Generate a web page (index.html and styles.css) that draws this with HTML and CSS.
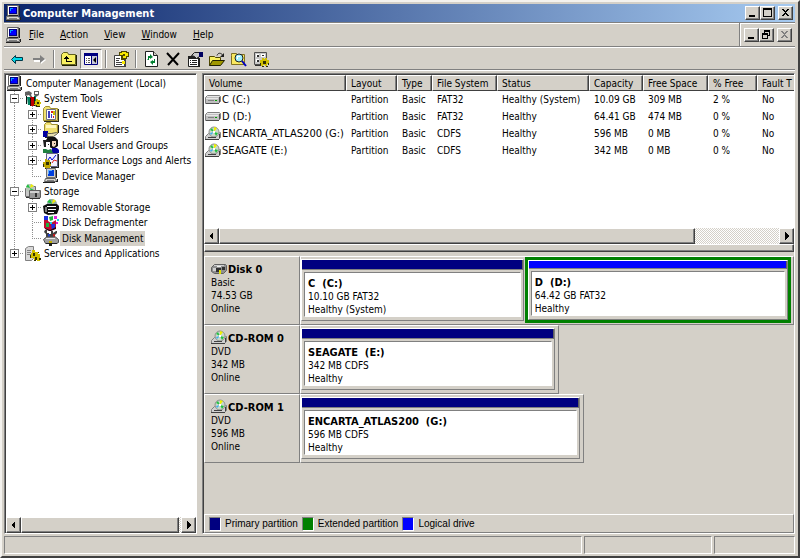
FILE: index.html
```html
<!DOCTYPE html>
<html lang="en">
<head>
<meta charset="UTF-8">
<meta name="viewport" content="width=device-width, initial-scale=1.0">
<title>Computer Management</title>
<link rel="stylesheet" href="styles.css">
</head>
<body>
<svg class="sprite" aria-hidden="true">
  <symbol id="computer" viewBox="0 0 16 16">
    <path fill="#b8b4ac" stroke="#606060" d="M1.500.5h11v10h-11z"/>
    <path fill="#fff" d="M2 1h9v1H3v8H2z"/>
    <path fill="#000080" d="M3 2h8v7H3z"/>
    <path fill="#0000ff" d="M4 3h6v5H4z"/>
    <path fill="#00a0ff" d="M4 3h3v1H5v2H4z"/>
    <path fill="#d8d6d0" stroke="#707070" d="M.5 11.500h11l2 1v2H.5z"/>
    <path fill="#808080" d="M3 13h8v1H3z"/>
    <path fill="#202020" d="M0 15h14v1H0zM13 1h1v10h-1zM14 12h1v3h-1zM3 10h9v1H3z"/>
  </symbol>
  <symbol id="tools" viewBox="0 0 16 16">
    <path fill="#606060" d="M0 1l4-1 3 2-1 2 2 3-1 1-3-4-4 1zM9 0h5v4l-3 2-2-2z"/>
    <path fill="#fff" d="M10 1h3v2h-3z"/>
    <path fill="#c00000" d="M5 6h4v9H6z"/>
    <path fill="#008060" d="M2 6h3v8H3zM9 5h2v5H9z"/>
    <path fill="#101010" d="M1 5h1v8H1zM5 7h1v8H5zM9 6h1v9H9z"/>
    <path fill="#d0c000" d="M11 8h2v1h2v2h1v2h-1v2h-4v-1h-2v-4h2z"/>
    <path fill="#303000" d="M12 11h2v2h-2zM10 14h2v1h3v1h-4zM9 10h1v3H9z"/>
  </symbol>
  <symbol id="events" viewBox="0 0 16 16">
    <path fill="#f0e070" stroke="#a09030" d="M.5 2.500l2-2h4l1 2h7v12H.5z"/>
    <path fill="#fff" stroke="#707080" d="M3.500 3.500h9v10h-9z"/>
    <path fill="#4040c0" d="M5 5h2v7H5zM8 8h1v4H8z"/>
    <path fill="#e02020" d="M8 5h2v2H8zM10 10h1v2h-1z"/>
    <path fill="#d0c000" d="M10 5h2v4h-2z"/>
    <path fill="#303020" d="M15 3h1v13H1v-1h14z"/>
  </symbol>
  <symbol id="shared" viewBox="0 0 16 16">
    <path fill="#f0e070" stroke="#a09030" d="M1.500 2.500l2-2h4l1 2h6v9h-13z"/>
    <path fill="#fff8c0" d="M3 3h10v3H3z"/>
    <path fill="#0000a0" d="M0 9h5v6H0z"/>
    <path fill="#e8e0b0" stroke="#606050" d="M4.500 11.500h4l5-1 1 1-4 3h-6z"/>
    <path fill="#202020" d="M2 15h10v1H2zM15 3h1v8h-1z"/>
  </symbol>
  <symbol id="users" viewBox="0 0 16 16">
    <path fill="#101010" d="M5 0h7l3 3v6l-3 2H8L3 7V3z"/>
    <path fill="#f0d8c0" d="M9 4h4v4l-2 2-2-1z"/>
    <path fill="#fff" d="M2 5h5v5l-2 2-3-2z"/>
    <path fill="#202020" d="M0 3h5l2 2H3v5H1zM5 7h1v1H5zM11 6h1v1h-1z"/>
    <path fill="#0000a0" d="M9 11h5l2 2v3H8z"/>
    <path fill="#208040" d="M0 12h3l2 1 3-1 2 4H0z"/>
  </symbol>
  <symbol id="perf" viewBox="0 0 16 16">
    <path fill="#f0f0ff" stroke="#606080" d="M3.500.5h11v13h-11z"/>
    <path fill="none" stroke="#0000d0" d="M5 7l2-3 2 3 4-5"/>
    <path fill="none" stroke="#e02020" d="M9 10l2-3 3 1"/>
    <path fill="#c0a800" d="M2 6h2v1h3v2h1v4H7v2H2v-1H0V9h2z"/>
    <path fill="#303000" d="M3 9h3v3H3zM0 11h1v3H0zM2 15h5v1H2zM7 9h1v2H7z"/>
    <path fill="#202020" d="M15 1h1v14H8v-1h7z"/>
  </symbol>
  <symbol id="device" viewBox="0 0 16 16">
    <path fill="#d4d0c8" stroke="#707070" d="M3.500.5h9v9h-9z"/>
    <path fill="#0040e0" d="M5 2h6v6H5z"/>
    <path fill="#60b0ff" d="M5 2h4v1H6v3H5z"/>
    <path fill="#d8d6d0" stroke="#606060" d="M2.500 10.500h10l1 3h-12z"/>
    <path fill="#202020" d="M0 14h12v1H0zM13 2h1v8h-1zM14 11h1v3h-2v-1h1z"/>
    <path fill="#808080" d="M4 12h7v1H4z"/>
  </symbol>
  <symbol id="storage" viewBox="0 0 16 16">
    <path fill="#c8c8c8" stroke="#707070" d="M.5 4.500l3-2h7v10H.5z"/>
    <circle cx="5" cy="4" r="4" fill="#b8c8b8"/>
    <path fill="#20c040" d="M5 4L1 3l2-3zM5 4l4 2-3 2z"/>
    <path fill="#f0f000" d="M5 4l1-4 3 2z"/>
    <path fill="#989898" stroke="#606060" d="M4.500 6.500h11v7l-3 1h-8z"/>
    <path fill="#d0d0d0" d="M5 7h9v2H5z"/>
    <path fill="#303030" d="M10 9h2v4h-2zM1 13h3v1H1zM5 14h10v1H5z"/>
  </symbol>
  <symbol id="removable" viewBox="0 0 16 16">
    <circle cx="9" cy="5" r="5" fill="#90a8a8"/>
    <path fill="#20c040" d="M9 5L4 3l3-3zM9 5l5 1-2 3z"/>
    <path fill="#f0f000" d="M9 5l1-5 3 2z"/>
    <path fill="#101010" d="M0 7l4-2h10l2 2v3l-2 5-9 1-4-2z"/>
    <path fill="#fff" d="M4 7h9v1H4zM5 10h8v1H5zM5 13h6v1H5z"/>
    <path fill="#808080" d="M2 8h2v5H2z"/>
  </symbol>
  <symbol id="defrag" viewBox="0 0 16 16">
    <path fill="#c01030" d="M1 3l4-2v5l3 2 5-3v8l-6 3-6-3z"/>
    <path fill="#2030e0" d="M1 1h4v4H1zM8 9h4v4l-3 2z"/>
    <path fill="#20b040" d="M6 2l4-1v4l-3 1zM3 8h3v4H3z"/>
    <path fill="#e020e0" d="M11 1h3v3h-3zM13 7h2v2h-2z"/>
    <path fill="#20d0e0" d="M14 4h2v2h-2zM7 7h2v2H7z"/>
    <path fill="#300010" d="M2 13l5 2 6-3v2l-5 2H6l-4-2z"/>
  </symbol>
  <symbol id="diskmgmt" viewBox="0 0 16 16">
    <path fill="#404040" d="M2 0h2v3h2v1h2V1h2v2l3-2h1v2l-2 2v3H3V4L1 2z"/>
    <path fill="#2040c0" d="M5 4h2v3H5z"/>
    <path fill="#c02020" d="M10 4h2v3h-2z"/>
    <path fill="#a0a0a0" stroke="#505050" d="M.5 9.500l3-2.500h9l3 2.500v3l-2 1h-11z"/>
    <path fill="#e8e8e8" d="M3 8h9v1H3z"/>
    <path fill="#c0b000" d="M6 11h3v2H6z"/>
    <path fill="#202020" d="M3 13h11v1H9v2H6v-2H3z"/>
  </symbol>
  <symbol id="services" viewBox="0 0 16 16">
    <path fill="#d8d8d8" stroke="#808080" d="M.5 2.500l3-2h5v12l-2 2h-6z"/>
    <path fill="#808080" d="M2 4h4v1H2zM2 6h4v1H2zM2 8h4v1H2z"/>
    <path fill="#d0c000" d="M7 4h3v2h3v2h2v4h-2v2H9v-2H6V7h1zM12 11h3v4h-3z"/>
    <path fill="#303000" d="M8 7h2v3H8zM5 9h1v3H5zM10 11h2v3h-1v1H9v-1h1zM13 6h1v1h-1zM14 12h2v2h-2z"/>
  </symbol>
  <symbol id="drive" viewBox="0 0 16 16">
    <path fill="#c0c0c0" stroke="#808080" d="M.5 5.500l2-2h12l1 1v5l-2 2h-13z"/>
    <path fill="#e8e8e8" d="M2 4h12v1H2zM1 6h12v1H1z"/>
    <path fill="#505050" d="M1 11h13v1H1zM14 5h1v5h-1z"/>
    <path fill="#808080" d="M3 8h6v1H3z"/>
    <path fill="#00a000" d="M10 8h2v1h-2z"/>
  </symbol>
  <symbol id="harddisk" viewBox="0 0 16 16">
    <path fill="#909090" stroke="#606060" d="M.5 6.500l3-3h11l1 1v5l-3 3h-9l-3-2z"/>
    <path fill="#d0d0d0" d="M3 4h10v1H3zM2 7h3v3H2z"/>
    <path fill="#303030" d="M5 7h5v2H8v2H5zM11 6h3v3h-3z"/>
    <path fill="#e0e000" d="M8 9h2v4H8z"/>
    <path fill="#f0f0f0" d="M6 5h4v1H6z"/>
  </symbol>
  <symbol id="cdrom" viewBox="0 0 16 16">
    <path fill="#d0d0d0" stroke="#808080" d="M.5 10.500l3-3h9l3-1v5l-2 2h-13z"/>
    <circle cx="9" cy="6" r="5" fill="#c8d8c8" stroke="#909090"/>
    <path fill="#20c040" d="M9 6L5 4l2-2zM9 6l4 1-2 3z"/>
    <path fill="#f0f000" d="M9 6V1l3 1z"/>
    <path fill="#40b0f0" d="M9 6L5 7l1 2z"/>
    <path fill="#fff" d="M8 5h2v2H8z"/>
    <path fill="#404040" d="M0 13h14v1H0zM3 11h8v1H3zM14 8h1v4h-1z"/>
  </symbol>
  <symbol id="back" viewBox="0 0 16 16">
    <path fill="#00d8e8" stroke="#003848" d="M2.500 8.500l4-4v2h7v3h-7v3z"/>
  </symbol>
  <symbol id="forward" viewBox="0 0 16 16">
    <path fill="#fff" d="M3 8h7V5l5 4-5 4v-2H3z"/>
    <path fill="#808080" d="M2 7h7V4l5 4-5 4V9H2z"/>
  </symbol>
  <symbol id="up" viewBox="0 0 16 16">
    <path fill="#f8f060" stroke="#606020" d="M.5 3.500l2-2h4l1 2h7v10H.5z"/>
    <path fill="#000" d="M5 5h1v1h1v1H4V6h1zM5 7h1v3h5v1H5zM3 7h5v1H3z"/>
    <path fill="#202000" d="M15 4h1v11H1v-1h14z"/>
  </symbol>
  <symbol id="panes" viewBox="0 0 16 16">
    <path fill="#fff" stroke="#000080" d="M1.500 2.500h13v11h-13z"/>
    <path fill="#000080" d="M1 2h14v3H1zM8 5h1v9H8z"/>
    <path fill="#606060" d="M3 7h1v1H3zM5 7h2v1H5zM3 9h1v1H3zM5 9h2v1H5zM3 11h1v1H3zM5 11h2v1H5z"/>
    <path fill="#c8c8d8" d="M9 5h5v8H9z"/>
    <path fill="#000" d="M10 9l3-3v6z"/>
  </symbol>
  <symbol id="help" viewBox="0 0 16 16">
    <path fill="#fff" stroke="#404040" d="M1.500 4.500h10v11h-10z"/>
    <path fill="#404040" d="M3 7h4v1H3zM3 9h3v1H3zM3 11h6v1H3zM3 13h6v1H3zM12 6h1v10H2v-1h10z"/>
    <path fill="#504800" d="M6 1h2V0h6v1h2v5h-2v2h-2v1H8V5H6z"/>
    <path fill="#f8e800" d="M7 2h2V1h4v1h2v3h-2v2h-3V5h2V3h-2v1H7zM9 10h3v3H9z"/>
  </symbol>
  <symbol id="refresh" viewBox="0 0 16 16">
    <path fill="#fff" stroke="#202020" d="M2.500.5h8l4 4v11h-12z"/>
    <path fill="#d4d0c8" stroke="#202020" d="M10.500.5v4h4"/>
    <path fill="#008030" d="M5 8V5h2V3l3 3-3 2V7H6v2H4zM12 8v4h-2v2l-3-3 3-2v1h1V8z"/>
  </symbol>
  <symbol id="delete" viewBox="0 0 16 16">
    <path fill="none" stroke="#000" stroke-width="2" d="M2 2l11 12M14 2L3 14"/>
  </symbol>
  <symbol id="properties" viewBox="0 0 16 16">
    <path fill="#fff" stroke="#202020" d="M1.500 5.500h10v10h-10z"/>
    <path fill="#202020" d="M1 5h11v3H1zM3 9h1v1H3zM5 9h5v1H5zM3 11h1v1H3zM5 11h5v1H5zM3 13h7v1H3zM12 7h1v9H2v-1h10z"/>
    <path fill="#c8c8c8" stroke="#202020" d="M4.500 4.500l3-3h5v4l-3 2-2-2z"/>
    <path fill="#000060" d="M12 1h4v5h-4z"/>
  </symbol>
  <symbol id="open" viewBox="0 0 16 16">
    <path fill="#f8f060" stroke="#504800" d="M.5 14.500v-9h5l1 1h5v3"/>
    <path fill="#a09800" stroke="#202000" d="M.5 14.500l3-5h12l-4 5z"/>
    <path fill="none" stroke="#202020" d="M8 4.500c1-3 4-3 6 0"/>
    <path fill="#202020" d="M15 2v4h-4z"/>
  </symbol>
  <symbol id="search" viewBox="0 0 16 16">
    <path fill="#f8e860" stroke="#807020" d="M.5 4.500v-2h5l1 1h7v10H.5z"/>
    <circle cx="8" cy="7" r="4" fill="#a0f0ff" stroke="#202020"/>
    <path fill="#fff" d="M6 5h3v1H7v2H6z"/>
    <path fill="none" stroke="#0000c0" stroke-width="2" d="M11 10l4 5"/>
  </symbol>
  <symbol id="settings" viewBox="0 0 16 16">
    <path fill="#c8c8c8" stroke="#505050" d="M1.500 1.500h12v12h-12z"/>
    <path fill="#fff" d="M3 3h3v3H3zM8 3h4v3H8zM3 8h3v3H3z"/>
    <path fill="#303030" d="M4 4h2v2H4zM9 4h2v1H9zM4 9h2v2H4zM2 14h7v1H2z"/>
    <path fill="#d0c000" d="M9 7h2v1h1V7h2v2h2v4h-2v2h-2v-1h-2v1H8v-3H7V9h2z"/>
    <path fill="#303000" d="M10 10h3v3h-3zM7 12h1v2H7zM9 15h2v1H9zM13 15h2v1h-2zM15 12h1v2h-1z"/>
  </symbol>
  <symbol id="minimize" viewBox="0 0 11 10"><path d="M2 7h6v2H2z"/></symbol>
  <symbol id="maximize" viewBox="0 0 11 10"><path d="M1 0h9v9H1zM2 2v6h7V2z" fill-rule="evenodd"/></symbol>
  <symbol id="restore" viewBox="0 0 11 10"><path d="M3 0h6v6H7v3H1V3h2zM4 2v1h3v2h1V2zM2 5v3h4V5z" fill-rule="evenodd"/></symbol>
  <symbol id="close" viewBox="0 0 11 10"><path d="M2 1h2v1h1v1h1V2h1V1h2v1H8v1H7v1H6v1h1v1h1v1h1v1H7V7H6V6H5v1H4v1H2V7h1V6h1V5h1V4H4V3H3V2H2z"/></symbol>
  <symbol id="left" viewBox="0 0 11 10"><path d="M3 5l4-4v8z"/></symbol>
  <symbol id="right" viewBox="0 0 11 10"><path d="M8 5L4 1v8z"/></symbol>
</svg>

<div class="window">
  <header class="titlebar">
    <svg class="icon"><use href="#computer"/></svg>
    <h1>Computer Management</h1>
    <div class="window-buttons">
      <button aria-label="Minimize"><svg><use href="#minimize"/></svg></button>
      <button aria-label="Maximize"><svg><use href="#maximize"/></svg></button>
      <button class="close" aria-label="Close"><svg><use href="#close"/></svg></button>
    </div>
  </header>

  <div class="menubar">
    <nav class="menu">
      <svg class="icon"><use href="#computer"/></svg>
      <button><u>F</u>ile</button>
      <button><u>A</u>ction</button>
      <button><u>V</u>iew</button>
      <button><u>W</u>indow</button>
      <button><u>H</u>elp</button>
    </nav>
    <div class="window-buttons">
      <button aria-label="Minimize child window"><svg><use href="#minimize"/></svg></button>
      <button aria-label="Restore child window"><svg><use href="#restore"/></svg></button>
      <button class="close" aria-label="Close child window" disabled><svg><use href="#close"/></svg></button>
    </div>
  </div>

  <div class="toolbar">
    <button aria-label="Back"><svg class="icon"><use href="#back"/></svg></button>
    <button aria-label="Forward" disabled><svg class="icon"><use href="#forward"/></svg></button>
    <span class="separator"></span>
    <button aria-label="Up one level"><svg class="icon"><use href="#up"/></svg></button>
    <button class="pressed" aria-label="Show console tree" aria-pressed="true"><svg class="icon"><use href="#panes"/></svg></button>
    <span class="separator"></span>
    <button aria-label="Help"><svg class="icon"><use href="#help"/></svg></button>
    <span class="separator"></span>
    <button aria-label="Refresh"><svg class="icon"><use href="#refresh"/></svg></button>
    <button aria-label="Delete"><svg class="icon"><use href="#delete"/></svg></button>
    <button aria-label="Properties"><svg class="icon"><use href="#properties"/></svg></button>
    <button aria-label="Open"><svg class="icon"><use href="#open"/></svg></button>
    <button aria-label="Explore"><svg class="icon"><use href="#search"/></svg></button>
    <button aria-label="Settings"><svg class="icon"><use href="#settings"/></svg></button>
  </div>

  <main class="panes">
    <section class="tree-pane">
      <ul class="tree">
        <li><svg class="icon"><use href="#computer"/></svg><span class="name">Computer Management (Local)</span></li>
        <li><span class="guide branch"><button class="expander open" aria-label="Collapse System Tools"></button></span><svg class="icon"><use href="#tools"/></svg><span class="name">System Tools</span></li>
        <li><span class="guide"></span><span class="guide branch"><button class="expander" aria-label="Expand Event Viewer"></button></span><svg class="icon"><use href="#events"/></svg><span class="name">Event Viewer</span></li>
        <li><span class="guide"></span><span class="guide branch"><button class="expander" aria-label="Expand Shared Folders"></button></span><svg class="icon"><use href="#shared"/></svg><span class="name">Shared Folders</span></li>
        <li><span class="guide"></span><span class="guide branch"><button class="expander" aria-label="Expand Local Users and Groups"></button></span><svg class="icon"><use href="#users"/></svg><span class="name">Local Users and Groups</span></li>
        <li><span class="guide"></span><span class="guide branch"><button class="expander" aria-label="Expand Performance Logs and Alerts"></button></span><svg class="icon"><use href="#perf"/></svg><span class="name">Performance Logs and Alerts</span></li>
        <li><span class="guide"></span><span class="guide branch last"></span><svg class="icon"><use href="#device"/></svg><span class="name">Device Manager</span></li>
        <li><span class="guide branch"><button class="expander open" aria-label="Collapse Storage"></button></span><svg class="icon"><use href="#storage"/></svg><span class="name">Storage</span></li>
        <li><span class="guide"></span><span class="guide branch"><button class="expander" aria-label="Expand Removable Storage"></button></span><svg class="icon"><use href="#removable"/></svg><span class="name">Removable Storage</span></li>
        <li><span class="guide"></span><span class="guide branch"></span><svg class="icon"><use href="#defrag"/></svg><span class="name">Disk Defragmenter</span></li>
        <li><span class="guide"></span><span class="guide branch last"></span><svg class="icon"><use href="#diskmgmt"/></svg><span class="name selected">Disk Management</span></li>
        <li><span class="guide branch last"><button class="expander" aria-label="Expand Services and Applications"></button></span><svg class="icon"><use href="#services"/></svg><span class="name">Services and Applications</span></li>
      </ul>
      <div class="scrollbar">
        <button aria-label="Scroll left"><svg><use href="#left"/></svg></button>
        <div class="track"><div class="thumb tree-thumb"></div></div>
        <button aria-label="Scroll right"><svg><use href="#right"/></svg></button>
      </div>
    </section>

    <section class="detail-pane">
      <div class="volume-list">
        <table>
          <colgroup>
            <col class="col-volume"><col class="col-layout"><col class="col-type">
            <col class="col-fs"><col class="col-status"><col class="col-capacity">
            <col class="col-space"><col class="col-percent"><col class="col-fault">
          </colgroup>
          <thead>
            <tr><th>Volume</th><th>Layout</th><th>Type</th><th>File System</th><th>Status</th><th>Capacity</th><th>Free Space</th><th>% Free</th><th>Fault T</th></tr>
          </thead>
          <tbody>
            <tr><td><svg class="icon"><use href="#drive"/></svg>C (C:)</td><td>Partition</td><td>Basic</td><td>FAT32</td><td>Healthy (System)</td><td>10.09 GB</td><td>309 MB</td><td>2 %</td><td>No</td></tr>
            <tr><td><svg class="icon"><use href="#drive"/></svg>D (D:)</td><td>Partition</td><td>Basic</td><td>FAT32</td><td>Healthy</td><td>64.41 GB</td><td>474 MB</td><td>0 %</td><td>No</td></tr>
            <tr><td><svg class="icon"><use href="#cdrom"/></svg>ENCARTA_ATLAS200 (G:)</td><td>Partition</td><td>Basic</td><td>CDFS</td><td>Healthy</td><td>596 MB</td><td>0 MB</td><td>0 %</td><td>No</td></tr>
            <tr><td><svg class="icon"><use href="#cdrom"/></svg>SEAGATE (E:)</td><td>Partition</td><td>Basic</td><td>CDFS</td><td>Healthy</td><td>342 MB</td><td>0 MB</td><td>0 %</td><td>No</td></tr>
          </tbody>
        </table>
      </div>
      <div class="scrollbar">
        <button aria-label="Scroll left"><svg><use href="#left"/></svg></button>
        <div class="track"><div class="thumb list-thumb"></div></div>
        <button aria-label="Scroll right"><svg><use href="#right"/></svg></button>
      </div>
      <div class="splitter"></div>

      <div class="disks">
        <article class="disk">
          <div class="disk-label">
            <h2><svg class="icon"><use href="#harddisk"/></svg>Disk 0</h2>
            <p>Basic</p><p>74.53 GB</p><p>Online</p>
          </div>
          <div class="partitions" style="flex-grow: 494">
            <div class="partition" style="flex-grow: 224">
              <div class="bar"></div>
              <div class="info"><h3>C&nbsp; (C:)</h3><p>10.10 GB FAT32</p><p>Healthy (System)</p></div>
            </div>
            <div class="extended" style="flex-grow: 264">
              <div class="partition logical">
                <div class="bar"></div>
                <div class="info"><h3>D&nbsp; (D:)</h3><p>64.42 GB FAT32</p><p>Healthy</p></div>
              </div>
            </div>
          </div>
        </article>
        <article class="disk">
          <div class="disk-label">
            <h2><svg class="icon"><use href="#cdrom"/></svg>CD-ROM 0</h2>
            <p>DVD</p><p>342 MB</p><p>Online</p>
          </div>
          <div class="partitions" style="flex-grow: 254">
            <div class="partition">
              <div class="bar"></div>
              <div class="info"><h3>SEAGATE&nbsp; (E:)</h3><p>342 MB CDFS</p><p>Healthy</p></div>
            </div>
          </div>
          <div style="flex-grow: 235"></div>
        </article>
        <article class="disk">
          <div class="disk-label">
            <h2><svg class="icon"><use href="#cdrom"/></svg>CD-ROM 1</h2>
            <p>DVD</p><p>596 MB</p><p>Online</p>
          </div>
          <div class="partitions" style="flex-grow: 279">
            <div class="partition">
              <div class="bar"></div>
              <div class="info"><h3>ENCARTA_ATLAS200&nbsp; (G:)</h3><p>596 MB CDFS</p><p>Healthy</p></div>
            </div>
          </div>
          <div style="flex-grow: 210"></div>
        </article>
      </div>

      <ul class="legend">
        <li><span class="swatch primary"></span>Primary partition</li>
        <li><span class="swatch green"></span>Extended partition</li>
        <li><span class="swatch blue"></span>Logical drive</li>
      </ul>
    </section>
  </main>

  <footer class="statusbar">
    <div></div>
    <div></div>
    <div></div>
  </footer>
</div>
</body>
</html>
```
FILE: styles.css
```css
* {
  box-sizing: border-box;
}

body {
  margin: 0;
  background: #d4d0c8;
  color: #000;
  font-family: Tahoma, "DejaVu Sans Condensed", "DejaVu Sans", sans-serif;
  font-size: 10px;
  line-height: 13px;
}

h1, h2, h3, p, ul {
  margin: 0;
  padding: 0;
}

h1, h2, h3 {
  font-size: 11px;
}

ul {
  list-style: none;
}

button {
  margin: 0;
  padding: 0;
  border: 0;
  background: #d4d0c8;
  color: #000;
  font: inherit;
}

.sprite {
  display: none;
}

.icon {
  width: 16px;
  height: 16px;
  flex: none;
}

.window {
  display: flex;
  flex-direction: column;
  height: 100vh;
  padding: 2px 3px 2px 2px;
  border: 2px solid;
  border-color: #f4f2ee #404040 #404040 #f4f2ee;
}

/* title bar */
.titlebar {
  display: flex;
  align-items: center;
  height: 18px;
  padding: 0 2px;
  background: linear-gradient(to right, #0a246a, #a6caf0);
}

.titlebar h1 {
  flex: 1;
  margin-left: 1px;
  color: #fff;
  white-space: nowrap;
}

.window-buttons {
  display: flex;
}

.window-buttons button,
.scrollbar button {
  display: flex;
  align-items: center;
  justify-content: center;
  width: 15px;
  height: 14px;
  border: 1px solid;
  border-color: #fff #404040 #404040 #fff;
  box-shadow: inset -1px -1px #808080;
}

.window-buttons svg,
.scrollbar svg {
  width: 11px;
  height: 10px;
  shape-rendering: crispEdges;
}

.window-buttons .close {
  margin-left: 3px;
}

.window-buttons button:disabled {
  color: #808080;
  fill: #808080;
}

/* menu */
.menubar {
  display: flex;
  height: 25px;
  border-top: 1px solid #808080;
  border-bottom: 1px solid #808080;
  box-shadow: inset 0 1px #fff;
}

.menu {
  display: flex;
  flex: 1;
  align-items: center;
  padding-left: 2px;
  border-right: 1px solid #808080;
}

.menu button {
  padding: 0 7px;
  margin-right: 2px;
}

.menubar .window-buttons {
  align-items: center;
  padding: 0 3px;
  border-left: 1px solid #fff;
}

/* toolbar */
.toolbar {
  display: flex;
  align-items: center;
  height: 23px;
  padding-left: 2px;
  border-top: 1px solid #fff;
  border-bottom: 1px solid #808080;
  box-shadow: 0 1px #fff;
}

.toolbar button {
  display: flex;
  align-items: center;
  justify-content: center;
  width: 22px;
  height: 20px;
}

.toolbar .pressed {
  border: 1px solid;
  border-color: #808080 #fff #fff #808080;
  background: #eae8e4;
}

.separator {
  width: 2px;
  height: 18px;
  margin: 0 3px;
  border-left: 1px solid #808080;
  border-right: 1px solid #fff;
}

/* panes */
.panes {
  display: flex;
  flex: 1;
  gap: 5px;
  min-height: 0;
  margin-top: 3px;
}

.tree-pane,
.detail-pane {
  display: flex;
  flex-direction: column;
  min-width: 0;
  border: 1px solid;
  border-color: #808080 #fff #fff #808080;
  box-shadow: inset 1px 1px #404040;
  padding: 1px 0 0 1px;
}

.tree-pane {
  flex: none;
  width: 193px;
  background: #fff;
}

.detail-pane {
  flex: 1;
}

.tree {
  flex: 1;
  overflow: hidden;
}

.tree li {
  display: flex;
  align-items: center;
  height: 16px;
  white-space: nowrap;
}

.tree li:nth-child(even) {
  height: 15px;
}

.tree .icon {
  margin: 0 1px;
}

.name {
  padding: 1px 2px;
}

.name.selected {
  background: #d4d0c8;
}

.guide {
  display: flex;
  flex: none;
  align-items: center;
  align-self: stretch;
  width: 18px;
  padding-left: 4px;
  background: repeating-linear-gradient(#909090 0 1px, #fff 1px 2px) 8px 0 / 1px 100% no-repeat;
}

.guide.branch {
  background:
    repeating-linear-gradient(#909090 0 1px, #fff 1px 2px) 8px 0 / 1px 100% no-repeat,
    repeating-linear-gradient(to right, #909090 0 1px, #fff 1px 2px) 8px 50% / 10px 1px no-repeat;
}

.guide.last {
  background:
    repeating-linear-gradient(#909090 0 1px, #fff 1px 2px) 8px 0 / 1px 50% no-repeat,
    repeating-linear-gradient(to right, #909090 0 1px, #fff 1px 2px) 8px 50% / 10px 1px no-repeat;
}

.expander {
  width: 9px;
  height: 9px;
  border: 1px solid #808080;
  background:
    linear-gradient(#000, #000) center / 5px 1px no-repeat,
    linear-gradient(#000, #000) center / 1px 5px no-repeat,
    #fff;
}

.expander.open {
  background:
    linear-gradient(#000, #000) center / 5px 1px no-repeat,
    #fff;
}

.scrollbar {
  display: flex;
  flex: none;
  height: 16px;
}

.scrollbar button {
  height: 16px;
}

.track {
  flex: 1;
  background: repeating-conic-gradient(#d4d0c8 0 25%, #fff 0 50%) 0 0 / 2px 2px;
}

.thumb {
  height: 16px;
  border: 1px solid;
  border-color: #fff #404040 #404040 #fff;
  background: #d4d0c8;
  box-shadow: inset -1px -1px #808080;
}

.tree-thumb {
  width: 99%;
}

.list-thumb {
  width: 85%;
}

/* volume list */
.volume-list {
  height: 153px;
  overflow: hidden;
  background: #fff;
}

.volume-list table {
  width: 650px;
  table-layout: fixed;
  border-collapse: separate;
  border-spacing: 0;
}

.volume-list th,
.volume-list td {
  padding: 0 0 0 5px;
  font-weight: normal;
  text-align: left;
  white-space: nowrap;
}

.volume-list th {
  height: 16px;
  border: 1px solid;
  border-color: #fff #404040 #404040 #fff;
  background: #d4d0c8;
  box-shadow: inset -1px 0 #808080;
  padding-left: 4px;
}

.volume-list td {
  height: 17px;
}

.volume-list td:first-child {
  padding-left: 1px;
  font-size: 11px;
}

.volume-list .icon {
  margin-right: 1px;
  vertical-align: middle;
}

.col-volume { width: 142px; }
.col-layout { width: 51px; }
.col-type { width: 35px; }
.col-fs { width: 65px; }
.col-status { width: 92px; }
.col-capacity { width: 54px; }
.col-space { width: 65px; }
.col-percent { width: 49px; }

.splitter {
  height: 8px;
  border: 1px solid;
  border-color: #fff #404040 #404040 #fff;
  box-shadow: inset -1px -1px #808080;
}

/* graphical view */
.disks {
  flex: 1;
  min-height: 0;
  overflow: hidden;
  padding-top: 4px;
}

.disk {
  display: flex;
  height: 69px;
}

.disk-label {
  flex: none;
  width: 96px;
  padding: 5px 0 0 6px;
  border: 1px solid;
  border-color: #fff #808080 #808080 #fff;
}

.disk-label h2 {
  display: flex;
  align-items: center;
  gap: 1px;
  height: 14px;
}

.partitions {
  display: flex;
  flex-basis: 0;
  padding: 2px 3px 3px 0;
  border: 1px solid;
  border-color: #fff #808080 #808080 #fff;
}

.partition {
  display: flex;
  flex: 1 1 0;
  flex-direction: column;
  border: 1px solid;
  border-color: #fff #808080 #808080 #fff;
}

.bar {
  height: 12px;
  border-right: 1px solid #606060;
  border-bottom: 1px solid #808080;
  background: #000080;
}

.logical .bar {
  background: #0000ff;
}

.info {
  flex: 1;
  margin: 2px 2px 3px;
  padding: 4px 3px 0;
  border: 1px solid;
  border-color: #808080 #fff #fff #808080;
  background: #fff;
  white-space: nowrap;
}

.extended {
  display: flex;
  flex-basis: 0;
  margin: -2px -1px -2px 1px;
  border: 3px solid #008000;
}

/* legend */
.legend {
  display: flex;
  flex: none;
  align-items: center;
  height: 19px;
  padding-left: 4px;
  border: 1px solid;
  border-color: #fff #808080 #808080 #fff;
  font-family: "Liberation Sans", Arial, sans-serif;
}

.legend li {
  display: flex;
  align-items: center;
  margin-right: 4px;
}

.swatch {
  width: 12px;
  height: 14px;
  margin-right: 4px;
  border: 1px solid;
  border-color: #808080 #fff #fff #808080;
}

.swatch.primary {
  background: #000080;
}

.swatch.green {
  background: #008000;
}

.swatch.blue {
  background: #0000ff;
}

/* status bar */
.statusbar {
  display: flex;
  flex: none;
  gap: 2px;
  height: 18px;
  margin-top: 2px;
}

.statusbar div {
  border: 1px solid;
  border-color: #808080 #fff #fff #808080;
}

.statusbar div:nth-child(1) {
  flex: 1;
}

.statusbar div:nth-child(2) {
  width: 128px;
}

.statusbar div:nth-child(3) {
  width: 81px;
}
```
